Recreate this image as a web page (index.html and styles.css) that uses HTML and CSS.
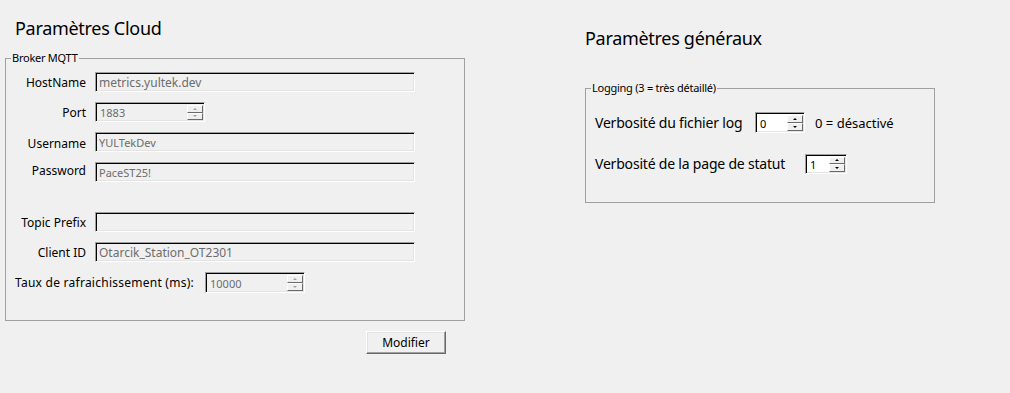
FILE: index.html
```html
<!DOCTYPE html>
<html lang="fr">
<head>
    <meta charset="UTF-8">
    <title>Paramètres</title>
    <link rel="stylesheet" href="styles.css">
</head>
<body>
    <div class="page">
        <section class="cloud">
            <h1 class="title">Paramètres Cloud</h1>

            <fieldset class="group broker">
                <legend>Broker MQTT</legend>

                <div class="row">
                    <label class="lbl">HostName</label>
                    <input class="box wide" type="text" value="metrics.yultek.dev" disabled>
                </div>

                <div class="row">
                    <label class="lbl">Port</label>
                    <div class="spin port disabled">
                        <input class="spin-val" type="text" value="1883" disabled>
                        <div class="spin-btns">
                            <span class="arrow up"></span>
                            <span class="arrow down"></span>
                        </div>
                    </div>
                </div>

                <div class="row">
                    <label class="lbl lbl-low">Username</label>
                    <input class="box wide small" type="text" value="YULTekDev" disabled>
                </div>

                <div class="row">
                    <label class="lbl lbl-high">Password</label>
                    <input class="box wide small" type="text" value="PaceST25!" disabled>
                </div>

                <div class="row spaced">
                    <label class="lbl">Topic Prefix</label>
                    <input class="box wide" type="text" value="" disabled>
                </div>

                <div class="row">
                    <label class="lbl">Client ID</label>
                    <input class="box wide" type="text" value="Otarcik_Station_OT2301" disabled>
                </div>

                <div class="row refresh">
                    <label class="lbl-free">Taux de rafraichissement (ms):</label>
                    <div class="spin rate disabled">
                        <input class="spin-val" type="text" value="10000" disabled>
                        <div class="spin-btns">
                            <span class="arrow up"></span>
                            <span class="arrow down"></span>
                        </div>
                    </div>
                </div>
            </fieldset>

            <div class="actions">
                <button class="btn">Modifier</button>
            </div>
        </section>

        <section class="general">
            <h1 class="title title-right">Paramètres généraux</h1>

            <fieldset class="group logging">
                <legend>Logging (3 = très détaillé)</legend>

                <div class="row big">
                    <label class="lbl-big first">Verbosité du fichier log</label>
                    <div class="spin log">
                        <input class="spin-val" type="text" value="0">
                        <div class="spin-btns">
                            <span class="arrow up"></span>
                            <span class="arrow down"></span>
                        </div>
                    </div>
                    <span class="hint">0 = désactivé</span>
                </div>

                <div class="row big">
                    <label class="lbl-big second">Verbosité de la page de statut</label>
                    <div class="spin status">
                        <input class="spin-val" type="text" value="1">
                        <div class="spin-btns">
                            <span class="arrow up"></span>
                            <span class="arrow down"></span>
                        </div>
                    </div>
                </div>
            </fieldset>
        </section>
    </div>
</body>
</html>
```

FILE: styles.css
```css
:root {
    --face: #f0f0f0;
    --shadow: #a0a0a0;
    --dark: #696969;
    --light: #e3e3e3;
    --muted: #6d6d6d;
}

html, body {
    margin: 0;
    height: 100%;
    background: var(--face);
}

body {
    font-family: 'Noto Sans', 'Open Sans', sans-serif;
    font-size: 12px;
    color: #000;
}

.page {
    display: flex;
    padding: 16px 0 0 5px;
}

.cloud {
    width: 460px;
}

.general {
    width: 350px;
    margin-left: 120px;
}

.title {
    margin: 0 0 0 10px;
    font-size: 18px;
    line-height: 24px;
    font-weight: 400;
    letter-spacing: -0.3px;
}

.title-right {
    margin: 10px 0 0 0;
}

/* group boxes */
.group {
    margin: 11px 0 0 0;
    padding: 7px 0 27px 0;
    border: 1px solid var(--shadow);
    min-width: 0;
}

.group legend {
    margin-left: 5px;
    padding: 0 1px;
    font-size: 11px;
    line-height: 14px;
    letter-spacing: -0.25px;
}

.logging {
    margin-top: 31px;
    padding: 17px 0 28px 0;
}

.row {
    display: flex;
    align-items: center;
    height: 20px;
    margin-top: 10px;
}

.row.spaced {
    margin-top: 30px;
}

.row.refresh {
    height: 21px;
    padding-left: 9px;
}

.row.big {
    height: 21px;
    margin-top: 20px;
    padding-left: 9px;
}

.group .row:first-of-type {
    margin-top: 0;
}

.lbl {
    width: 80px;
    margin-right: 9px;
    text-align: right;
    white-space: nowrap;
}

.lbl-low {
    position: relative;
    top: 1px;
}

.lbl-high {
    position: relative;
    top: -2px;
}

.lbl-free {
    width: 190px;
    letter-spacing: 0.25px;
    white-space: nowrap;
}

.lbl-big {
    font-size: 14px;
    letter-spacing: -0.2px;
    white-space: nowrap;
}

.lbl-big.first {
    width: 160px;
}

.lbl-big.second {
    width: 210px;
}

.hint {
    margin-left: 10px;
    font-size: 13px;
    white-space: nowrap;
}

/* sunken edit boxes */
.box,
.spin {
    box-sizing: border-box;
    height: 20px;
    border: 1px solid;
    border-color: var(--shadow) #fff #fff var(--shadow);
    box-shadow: inset 1px 1px 0 #000, inset -1px -1px 0 var(--light);
    background: #fff;
}

.box {
    width: 320px;
    margin: 0;
    padding: 0 0 0 3px;
    font-family: inherit;
    font-size: 12px;
    color: var(--muted);
    outline: none;
}

.box:disabled,
.spin.disabled {
    background: var(--face);
}

.box.small {
    font-size: 11px;
}

.spin {
    display: flex;
    padding: 2px 1px 1px 2px;
}

.spin.port {
    width: 110px;
}

.spin.rate {
    width: 100px;
    height: 21px;
}

.spin.log {
    width: 50px;
    height: 21px;
}

.spin.status {
    width: 42px;
}

.spin-val {
    flex: 1;
    min-width: 0;
    margin: 0;
    padding: 0 0 0 2px;
    border: none;
    background: transparent;
    font-family: inherit;
    font-size: 11px;
    color: #000;
    outline: none;
}

.spin.disabled .spin-val {
    color: var(--muted);
}

.spin-btns {
    display: flex;
    flex-direction: column;
    width: 16px;
}

.arrow {
    flex: 1;
    display: flex;
    align-items: center;
    justify-content: center;
    box-sizing: border-box;
    border: 1px solid;
    border-color: #fff var(--dark) var(--dark) #fff;
    background: var(--face);
}

.arrow::before {
    content: '';
    border-left: 2px solid transparent;
    border-right: 2px solid transparent;
}

.arrow.up::before {
    border-bottom: 2px solid #000;
}

.arrow.down::before {
    border-top: 2px solid #000;
}

.spin.disabled .arrow.up::before {
    border-bottom-color: var(--shadow);
}

.spin.disabled .arrow.down::before {
    border-top-color: var(--shadow);
}

/* button */
.actions {
    display: flex;
    justify-content: flex-end;
    padding-right: 19px;
    margin-top: 10px;
}

.btn {
    width: 80px;
    height: 23px;
    padding: 0;
    border: 1px solid;
    border-color: #fff var(--dark) var(--dark) #fff;
    box-shadow: inset -1px -1px 0 var(--shadow), inset 1px 1px 0 var(--light);
    background: var(--face);
    font-family: inherit;
    font-size: 12px;
    color: #000;
}
```
